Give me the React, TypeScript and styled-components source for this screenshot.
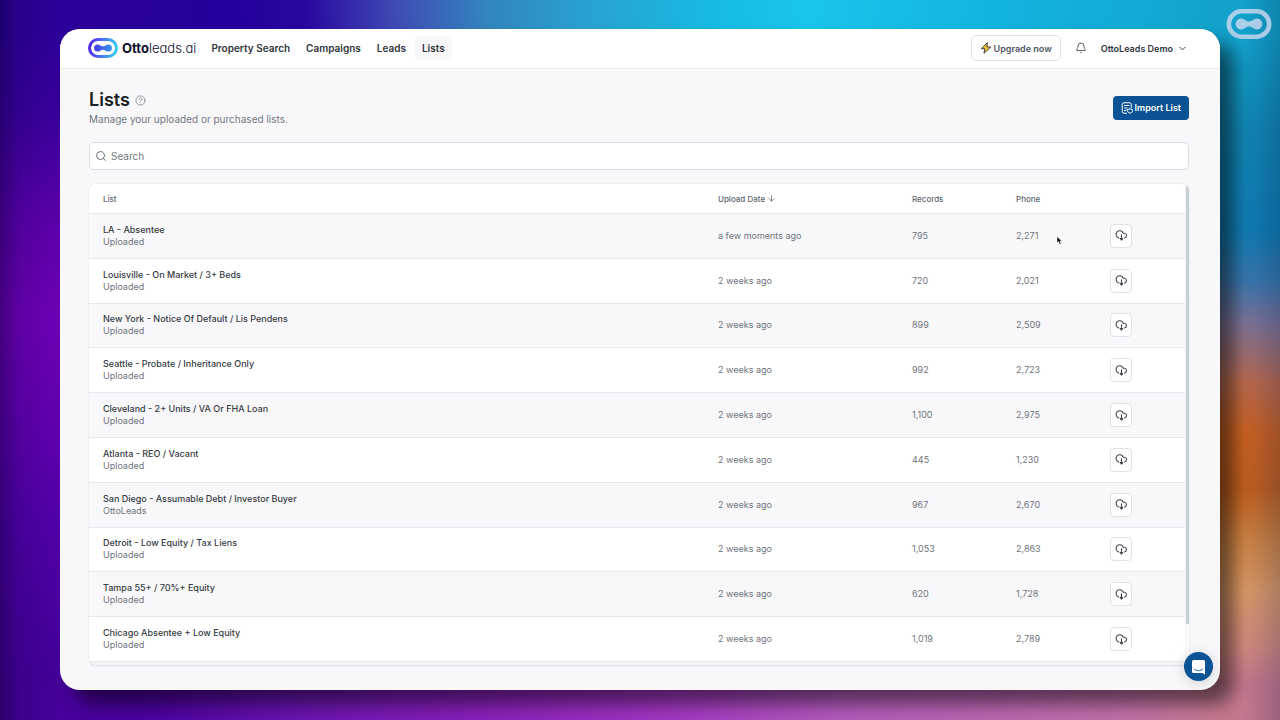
import React from "react";
import styled, { createGlobalStyle } from "styled-components";
import { ArrowDown, Bell, ChevronDown, CircleHelp, Search } from "lucide-react";

const GlobalStyle = createGlobalStyle`
  *, *::before, *::after { box-sizing: border-box; }
  body {
    margin: 0;
    font-family: Inter, "Liberation Sans", sans-serif;
    color: #30363d;
  }
  button, input { font: inherit; color: inherit; }
  h1, p { margin: 0; }
  svg { display: block; flex: none; }
`;

const Backdrop = styled.div`
  position: relative;
  display: flex;
  min-height: 100vh;
  padding: 29px 60px 30px;
  background:
    linear-gradient(to right, rgba(10, 0, 50, 0.42), rgba(10, 0, 60, 0.16) 20px, transparent 60px calc(100% - 36px), rgba(0, 20, 60, 0.22)),
    linear-gradient(to right, #2e0099 0%, #25009c 19%, #2a09a0 24%, #3f4cb4 31%, #3285be 38%, #2a9fcf 45%, #17bce2 56%, #1ac5ea 63%, #12b4de 78%, #14a9d2 90%, #12a2cc 95%, #12a2cc 100%) top / 100% 36px no-repeat,
    linear-gradient(to right, #440098 0%, #4c02a0 12%, #6b15b0 24%, #8a20ba 38%, #a236c2 52%, #b45cbc 66%, #b866b2 76%, #c071a8 88%, #c5788f 95%, #c5788f 100%) bottom / 100% 36px no-repeat,
    linear-gradient(to bottom, #2e0099 5%, #3a009e 16%, #5b00ac 30%, #7000b8 44%, #6200b2 58%, #5200aa 72%, #440098 95%) left / 50% 100% no-repeat,
    linear-gradient(to bottom, #12a2cc 5%, #1187b6 18%, #0f7db5 32%, #3a78b0 39%, #7f7497 45%, #bc6b50 53%, #cb6222 60%, #c2601f 68%, #d08444 75%, #dc9a68 82%, #d48a80 90%, #c5788f 95%) right / 50% 100% no-repeat;
`;

const Watermark = styled.div`
  position: absolute;
  top: 9px;
  right: 8px;
  opacity: 0.78;
`;

const AppWindow = styled.div`
  position: relative;
  flex: 1;
  min-width: 0;
  display: flex;
  flex-direction: column;
  border-radius: 20px;
  background: #f8f8fa;
  box-shadow: 14px 14px 18px rgba(0, 0, 0, 0.52);
`;

const TopBar = styled.header`
  display: flex;
  align-items: center;
  height: 40px;
  padding: 0 32px 1px 28px;
  border-bottom: 1px solid #e9eaed;
  border-radius: 20px 20px 0 0;
  background: #fff;
`;

const Brand = styled.a`
  display: flex;
  align-items: center;
  gap: 4px;
  margin-right: 8px;
  color: #0e0b2c;
  font-size: 13px;
  line-height: 16px;
  font-weight: 300;
  font-feature-settings: "cv11";
  text-decoration: none;
  b { font-weight: 700; }
`;

const Nav = styled.nav`
  display: flex;
  gap: 2px;
`;

const NavLink = styled.a<{ $active?: boolean }>`
  padding: 5px 7px;
  border-radius: 4px;
  background: ${(p) => (p.$active ? "#f7f7f9" : "transparent")};
  color: #30353c;
  font-size: 10px;
  line-height: 14px;
  font-weight: 600;
  text-decoration: none;
`;

const Account = styled.div`
  display: flex;
  align-items: center;
  gap: 14px;
  margin-left: auto;
`;

const UpgradeButton = styled.button`
  display: flex;
  align-items: center;
  gap: 2px;
  height: 26px;
  padding: 0 8px;
  border: 1px solid #dfe1e6;
  border-radius: 5px;
  background: #fff;
  color: #50565f;
  font-size: 9px;
  font-weight: 600;
`;

const PlainButton = styled.button`
  display: flex;
  align-items: center;
  gap: 4px;
  padding: 0;
  border: 0;
  background: none;
  color: #30353c;
  font-size: 9px;
  font-weight: 600;
`;

const Main = styled.main`
  flex: 1;
  display: flex;
  flex-direction: column;
  padding: 20px 31px 24px 29px;
`;

const PageHead = styled.div`
  display: flex;
  align-items: center;
  justify-content: space-between;
  margin-bottom: 16px;
`;

const TitleRow = styled.div`
  display: flex;
  align-items: center;
  gap: 5px;
  color: #8b9098;
  h1 {
    color: #1c1f24;
    font-size: 18px;
    line-height: 22px;
    font-weight: 600;
  }
`;

const Subtitle = styled.p`
  margin-top: 1px;
  color: #727780;
  font-size: 10px;
  line-height: 14px;
`;

const ImportButton = styled.button`
  display: flex;
  align-items: center;
  gap: 2px;
  height: 24px;
  padding: 0 8px;
  border: 0;
  border-radius: 4px;
  background: #0b5394;
  color: #fff;
  font-size: 9px;
  font-weight: 600;
`;

const SearchBox = styled.label`
  display: flex;
  align-items: center;
  gap: 4px;
  height: 28px;
  margin-bottom: 14px;
  padding: 0 5px;
  border: 1px solid #dcdee3;
  border-radius: 5px;
  background: #fff;
  color: #6d727b;
  input {
    flex: 1;
    min-width: 0;
    padding: 0;
    border: 0;
    outline: 0;
    background: none;
    font-size: 10px;
  }
  input::placeholder { color: #737983; opacity: 1; }
`;

const Card = styled.div`
  flex: 1;
  display: flex;
  gap: 1px;
  padding-bottom: 3px;
  border-bottom: 1px solid #e3e4e8;
  border-radius: 6px;
  background: #f5f5f7;
  box-shadow: 0 0 2px rgba(30, 35, 50, 0.14);
  overflow: hidden;
`;

const TableArea = styled.div`
  flex: 1;
  min-width: 0;
  display: flex;
  flex-direction: column;
`;

const Table = styled.table`
  flex: 1;
  width: 100%;
  border-spacing: 0;
  table-layout: fixed;
  text-align: left;
  font-size: 9px;
  line-height: 12px;
  color: #6f747d;
`;

const HeadCell = styled.th<{ $width?: number }>`
  width: ${(p) => (p.$width ? `${p.$width}px` : "auto")};
  height: 30px;
  padding: 0 0 0 14px;
  border-bottom: 1px solid #e8e9ec;
  background: #fff;
  color: #60656e;
  font-size: 8px;
  font-weight: 500;
  span {
    display: flex;
    align-items: center;
    gap: 2px;
  }
`;

const Row = styled.tr`
  background: #fff;
  &:nth-child(odd) { background: #f8f8fa; }
`;

const Cell = styled.td`
  height: 44px;
  padding: 0 0 0 14px;
  border-bottom: 1px solid #e8e9ec;
  vertical-align: middle;
`;

const ListName = styled.div`
  color: #363b43;
  font-weight: 500;
`;

const DownloadButton = styled.button`
  display: flex;
  align-items: center;
  justify-content: center;
  width: 22px;
  height: 24px;
  padding: 0;
  border: 1px solid #e0e2e6;
  border-radius: 4px;
  background: #fff;
  color: #42474f;
`;

const ScrollTrack = styled.div`
  width: 3px;
  padding-top: 2px;
  background: #fbfbfc;
`;

const ScrollThumb = styled.div`
  height: 92%;
  border-radius: 2px 2px 0 0;
  background: #c7ced4;
`;

const ChatButton = styled.button`
  position: absolute;
  right: 7px;
  bottom: 9px;
  display: flex;
  align-items: center;
  justify-content: center;
  width: 29px;
  height: 29px;
  padding: 0;
  border: 0;
  border-radius: 50%;
  background: #0b5394;
  box-shadow: 0 2px 14px rgba(0, 0, 0, 0.16);
`;

const Pointer = styled.svg`
  position: absolute;
  top: 206px;
  right: 157px;
`;

function LogoMark({ width, height, mono }: { width: number; height: number; mono?: boolean }) {
  const ring = mono ? "#d5dcf2" : "url(#brandRing)";
  const core = mono ? "#d5dcf2" : "url(#brandCore)";
  return (
    <svg width={width} height={height} viewBox="0 0 45 30" aria-hidden="true">
      {!mono && (
        <defs>
          <linearGradient id="brandRing" x1="0" y1="0.3" x2="1" y2="0.4">
            <stop offset="0" stopColor="#5326e8" />
            <stop offset="0.5" stopColor="#4a78f4" />
            <stop offset="1" stopColor="#35c8f4" />
          </linearGradient>
          <linearGradient id="brandCore" x1="0" y1="0" x2="1" y2="0">
            <stop offset="0" stopColor="#4a3be8" />
            <stop offset="1" stopColor="#3596f0" />
          </linearGradient>
        </defs>
      )}
      <rect x="2.3" y="2.3" width="40.4" height="25.4" rx="12.7" fill="none" stroke={ring} strokeWidth="4.6" />
      <path
        d="M14.5 9.600c3.500 0 4.800 2.900 8 2.900s4.500-2.900 8-2.900a5.400 5.400 0 0 1 0 10.800c-3.500 0-4.800-2.900-8-2.900s-4.500 2.900-8 2.900a5.400 5.400 0 0 1 0-10.800z"
        fill={core}
      />
    </svg>
  );
}

function BoltIcon() {
  return (
    <svg width="12" height="12" viewBox="0 0 24 24" aria-hidden="true">
      <path d="M14.500 1.500 2.500 13.500h7L8 22.500l13.500-12.500h-7.500z" fill="#f2c230" stroke="#3f3d38" strokeWidth="2" strokeLinejoin="round" />
    </svg>
  );
}

function ImportIcon() {
  return (
    <svg width="12" height="12" viewBox="0 0 24 24" fill="none" stroke="currentColor" strokeWidth="2" strokeLinecap="round" strokeLinejoin="round" aria-hidden="true">
      <path d="M11 22.500H6a3.500 3.500 0 0 1-3.500-3.500V5A3.500 3.500 0 0 1 6 1.500h11A3.500 3.500 0 0 1 20.500 5v6" />
      <path d="M7 7h9M7 12h5M7 17h3" />
      <path d="M13 15l5-1.500 5 1.500v2.500c0 2.500-2 4-5 5-3-1-5-2.500-5-5z" />
    </svg>
  );
}

function CloudIcon() {
  return (
    <svg width="13" height="13" viewBox="0 0 24 24" fill="none" stroke="currentColor" strokeWidth="2" strokeLinecap="round" strokeLinejoin="round" aria-hidden="true">
      <path d="M7 16.500A6.800 6.800 0 1 1 15.200 7.800H17.500A4.400 4.400 0 0 1 17.500 16.500" />
      <path d="M12 10.500v8" />
      <path d="M9.500 17.500h5L12 20.500z" fill="currentColor" />
    </svg>
  );
}

function ChatIcon() {
  return (
    <svg width="15" height="16" viewBox="0 0 15 16" aria-hidden="true">
      <path d="M2.500 1h10A1.500 1.500 0 0 1 14 2.500V15.500L11 14H2.500A1.500 1.500 0 0 1 1 12.500v-10A1.500 1.500 0 0 1 2.500 1z" fill="#fff" />
      <path d="M3.500 10.300c2.200 1.900 5.800 1.900 8 0" fill="none" stroke="#0b5394" strokeWidth="1" strokeLinecap="round" />
    </svg>
  );
}

const navItems = ["Property Search", "Campaigns", "Leads", "Lists"];

const lists = [
  { name: "LA - Absentee", source: "Uploaded", date: "a few moments ago", records: "795", phone: "2,271" },
  { name: "Louisville - On Market / 3+ Beds", source: "Uploaded", date: "2 weeks ago", records: "720", phone: "2,021" },
  { name: "New York - Notice Of Default / Lis Pendens", source: "Uploaded", date: "2 weeks ago", records: "899", phone: "2,509" },
  { name: "Seattle - Probate / Inheritance Only", source: "Uploaded", date: "2 weeks ago", records: "992", phone: "2,723" },
  { name: "Cleveland - 2+ Units / VA Or FHA Loan", source: "Uploaded", date: "2 weeks ago", records: "1,100", phone: "2,975" },
  { name: "Atlanta - REO / Vacant", source: "Uploaded", date: "2 weeks ago", records: "445", phone: "1,230" },
  { name: "San Diego - Assumable Debt / Investor Buyer", source: "OttoLeads", date: "2 weeks ago", records: "967", phone: "2,670" },
  { name: "Detroit - Low Equity / Tax Liens", source: "Uploaded", date: "2 weeks ago", records: "1,053", phone: "2,863" },
  { name: "Tampa 55+ / 70%+ Equity", source: "Uploaded", date: "2 weeks ago", records: "620", phone: "1,728" },
  { name: "Chicago Absentee + Low Equity", source: "Uploaded", date: "2 weeks ago", records: "1,019", phone: "2,789" },
];

export default function App() {
  return (
    <>
      <GlobalStyle />
      <Backdrop>
        <Watermark>
          <LogoMark width={46} height={30} mono />
        </Watermark>
        <AppWindow>
          <TopBar>
            <Brand href="#">
              <LogoMark width={30} height={20} />
              <span><b>Otto</b>leads.ai</span>
            </Brand>
            <Nav>
              {navItems.map((item) => (
                <NavLink key={item} href="#" $active={item === "Lists"}>{item}</NavLink>
              ))}
            </Nav>
            <Account>
              <UpgradeButton type="button"><BoltIcon />Upgrade now</UpgradeButton>
              <PlainButton type="button" aria-label="Notifications"><Bell size={12} color="#5c626b" /></PlainButton>
              <PlainButton type="button">OttoLeads Demo<ChevronDown size={11} /></PlainButton>
            </Account>
          </TopBar>
          <Main>
            <PageHead>
              <div>
                <TitleRow>
                  <h1>Lists</h1>
                  <CircleHelp size={11} />
                </TitleRow>
                <Subtitle>Manage your uploaded or purchased lists.</Subtitle>
              </div>
              <ImportButton type="button"><ImportIcon />Import List</ImportButton>
            </PageHead>
            <SearchBox>
              <Search size={12} />
              <input type="search" placeholder="Search" aria-label="Search" />
            </SearchBox>
            <Card>
              <TableArea>
                <Table>
                  <thead>
                    <tr>
                      <HeadCell>List</HeadCell>
                      <HeadCell $width={194}><span>Upload Date <ArrowDown size={9} /></span></HeadCell>
                      <HeadCell $width={104}>Records</HeadCell>
                      <HeadCell $width={94}>Phone</HeadCell>
                      <HeadCell $width={89} aria-label="Download" />
                    </tr>
                  </thead>
                  <tbody>
                    {lists.map((list) => (
                      <Row key={list.name}>
                        <Cell>
                          <ListName>{list.name}</ListName>
                          {list.source}
                        </Cell>
                        <Cell>{list.date}</Cell>
                        <Cell>{list.records}</Cell>
                        <Cell>{list.phone}</Cell>
                        <Cell>
                          <DownloadButton type="button" aria-label={`Download ${list.name}`}><CloudIcon /></DownloadButton>
                        </Cell>
                      </Row>
                    ))}
                  </tbody>
                </Table>
              </TableArea>
              <ScrollTrack><ScrollThumb /></ScrollTrack>
            </Card>
          </Main>
          <ChatButton type="button" aria-label="Open chat"><ChatIcon /></ChatButton>
          <Pointer width="7" height="11" viewBox="0 0 7 10" aria-hidden="true">
            <path d="M1 1v6.500l1.600-1.300 1.200 2.800 1.300-.6-1.200-2.700H6z" fill="#111" stroke="#fff" strokeWidth="0.500" />
          </Pointer>
        </AppWindow>
      </Backdrop>
    </>
  );
}
